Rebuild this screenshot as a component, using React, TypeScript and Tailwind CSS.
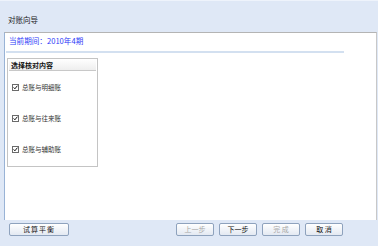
import React from "react";

const items = ["总账与明细账", "总账与往来账", "总账与辅助账"];

function Check() {
    return (
        <svg width="7" height="7" viewBox="0 0 7 7" className="shrink-0">
            <rect x="0.5" y="0.5" width="6" height="6" fill="#fff" stroke="#6b6b6b" />
            <path d="M1.6 3.4 L2.9 4.8 L5.4 1.7" fill="none" stroke="#111" strokeWidth="1" />
        </svg>
    );
}

function Btn({ label, disabled, w }: any) {
    return (
        <div
            className={
                "h-[13px] flex items-center justify-center rounded-[2px] border border-[#8ea2bd] bg-gradient-to-b from-white to-[#e3e9f2] text-[7px] leading-none " +
                w +
                (disabled ? " text-[#a8a8a8]" : " text-[#111]")
            }
        >
            {label}
        </div>
    );
}

export default function App() {
    return (
        <div
            className="w-[378px] h-[246px] bg-[#dfe8f6] flex flex-col border-t border-[#eef3fb]"
            style={{ fontFamily: '"Noto Sans CJK SC", "Liberation Sans", sans-serif' }}
        >
            <div className="h-[31px] pl-[8px] pt-[14px] text-[7.5px] leading-[10px] text-[#222]">对账向导</div>

            <div className="h-[188px] ml-[4px] mr-[1px] bg-white border-t border-[#b4b4b4] border-l border-l-[#99b3d6] border-r border-r-[#c8c8c8] flex flex-col">
                <div className="w-[338px] h-[20px] ml-[1px] border-b-2 border-[#d3e0f0] pl-[3px] pt-[3px] text-[7.6px] leading-[10px] text-[#2e3cf8]">
                    当前期间：2010年4期
                </div>

                <div className="ml-[2px] mt-[5px] w-[91px] h-[109px] border border-[#c4c4c4] shadow-[inset_1px_1px_0_#fff] flex flex-col">
                    <div className="h-[12px] mx-[1px] border-b border-[#c8c8c8] bg-gradient-to-b from-white to-[#eeeeee] pl-[2px] pt-[2px] text-[7px] leading-[8px] font-bold text-[#111]">
                        选择核对内容
                    </div>
                    <div className="flex flex-col gap-[22px] pl-[4px] pt-[12px]">
                        {items.map((x, i) => (
                            <div key={i} className="flex items-center gap-[3px] h-[9px]">
                                <Check />
                                <span className="text-[6.5px] leading-none text-[#333]">{x}</span>
                            </div>
                        ))}
                    </div>
                </div>
            </div>

            <div className="flex items-start pt-[3px] pl-[9px]">
                <Btn label="试算平衡" w="w-[60px] tracking-[1px]" />
                <div className="flex gap-[5px] ml-[107px]">
                    <Btn label="上一步" w="w-[38px]" disabled />
                    <Btn label="下一步" w="w-[38px]" />
                    <Btn label="完 成" w="w-[38px]" disabled />
                    <Btn label="取 消" w="w-[38px]" />
                </div>
            </div>
        </div>
    );
}
